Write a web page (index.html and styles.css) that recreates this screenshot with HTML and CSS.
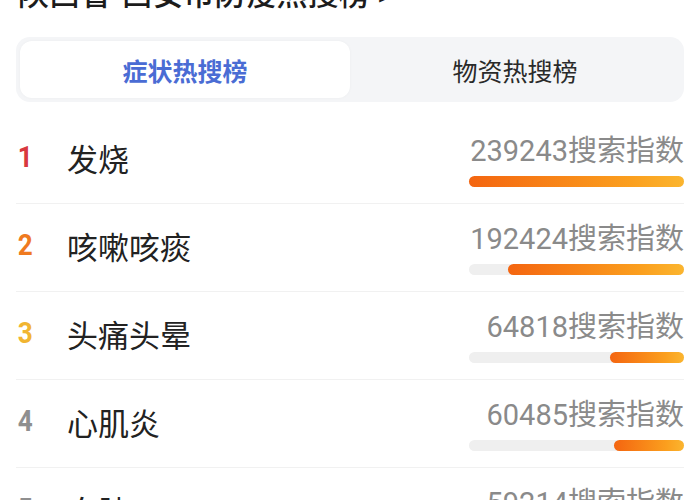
FILE: index.html
```html
<!DOCTYPE html>
<html lang="zh-CN">
<head>
    <meta charset="UTF-8">
    <title>防疫热搜榜</title>
    <link rel="stylesheet" href="styles.css">
</head>
<body>
    <div class="page">
        <h1 class="title">陕西省-西安市防疫热搜榜 &gt;</h1>

        <div class="tabs">
            <div class="tab active">症状热搜榜</div>
            <div class="tab">物资热搜榜</div>
        </div>

        <ul class="rank-list">
            <li class="row">
                <span class="rank r1">1</span>
                <span class="name">发烧</span>
                <div class="stat">
                    <div class="count">239243搜索指数</div>
                    <div class="track"><div class="fill" style="width: 100%"></div></div>
                </div>
            </li>
            <li class="row">
                <span class="rank r2">2</span>
                <span class="name">咳嗽咳痰</span>
                <div class="stat">
                    <div class="count">192424搜索指数</div>
                    <div class="track"><div class="fill" style="width: 82%"></div></div>
                </div>
            </li>
            <li class="row">
                <span class="rank r3">3</span>
                <span class="name">头痛头晕</span>
                <div class="stat">
                    <div class="count">64818搜索指数</div>
                    <div class="track"><div class="fill" style="width: 34.5%"></div></div>
                </div>
            </li>
            <li class="row">
                <span class="rank">4</span>
                <span class="name">心肌炎</span>
                <div class="stat">
                    <div class="count">60485搜索指数</div>
                    <div class="track"><div class="fill" style="width: 32.5%"></div></div>
                </div>
            </li>
            <li class="row">
                <span class="rank">5</span>
                <span class="name">白肺</span>
                <div class="stat">
                    <div class="count">59214搜索指数</div>
                    <div class="track"><div class="fill" style="width: 31.5%"></div></div>
                </div>
            </li>
        </ul>
    </div>
</body>
</html>
```

FILE: styles.css
```css
body {
    margin: 0;
    background: #ffffff;
    font-family: Roboto, "Noto Sans CJK SC", sans-serif;
    color: #222;
    overflow: hidden;
}

.page {
    padding: 0 16px;
}

.title {
    margin: -21px 0 0 2px;
    font-size: 31px;
    line-height: 31px;
    font-weight: 500;
    color: #1c1c1c;
}

/* tab switch */
.tabs {
    display: flex;
    margin-top: 27px;
    padding: 4px;
    background: #f4f5f7;
    border-radius: 14px;
}

.tab {
    flex: 1;
    height: 57px;
    display: flex;
    align-items: center;
    justify-content: center;
    font-size: 25px;
    color: #2a2a2a;
    border-radius: 12px;
}

.tab.active {
    background: #fff;
    color: #4a6cd4;
    font-weight: 700;
    box-shadow: 0 0 3px rgba(0,0,0,0.04);
}

/* list */
.rank-list {
    list-style: none;
    margin: 14px 0 0;
    padding: 0;
}

.row {
    display: flex;
    align-items: center;
    height: 87px;
    border-bottom: 1px solid #f1f1f1;
}

.rank {
    width: 49px;
    padding-left: 2px;
    padding-bottom: 5px;
    font-size: 29px;
    font-weight: 700;
    color: #8f8f8f;
    transform: scaleX(0.9);
    transform-origin: left center;
}

.r1 { color: #d8383f; }
.r2 { color: #ef7a1f; }
.r3 { color: #f1b531; }

.name {
    flex: 1;
    padding-bottom: 5px;
    font-size: 31px;
    color: #222;
}

.stat {
    width: 215px;
    display: flex;
    flex-direction: column;
    align-items: flex-end;
    gap: 10px;
    margin-top: 4px;
}

.count {
    font-size: 29px;
    line-height: 29px;
    color: #8a8a8a;
    white-space: nowrap;
}

.track {
    width: 100%;
    height: 11px;
    background: #efefef;
    border-radius: 6px;
    display: flex;
    justify-content: flex-end;
}

.fill {
    height: 100%;
    border-radius: 6px;
    background: linear-gradient(90deg, #f46510, #fb9f1e 75%, #fbb52f);
}
```
